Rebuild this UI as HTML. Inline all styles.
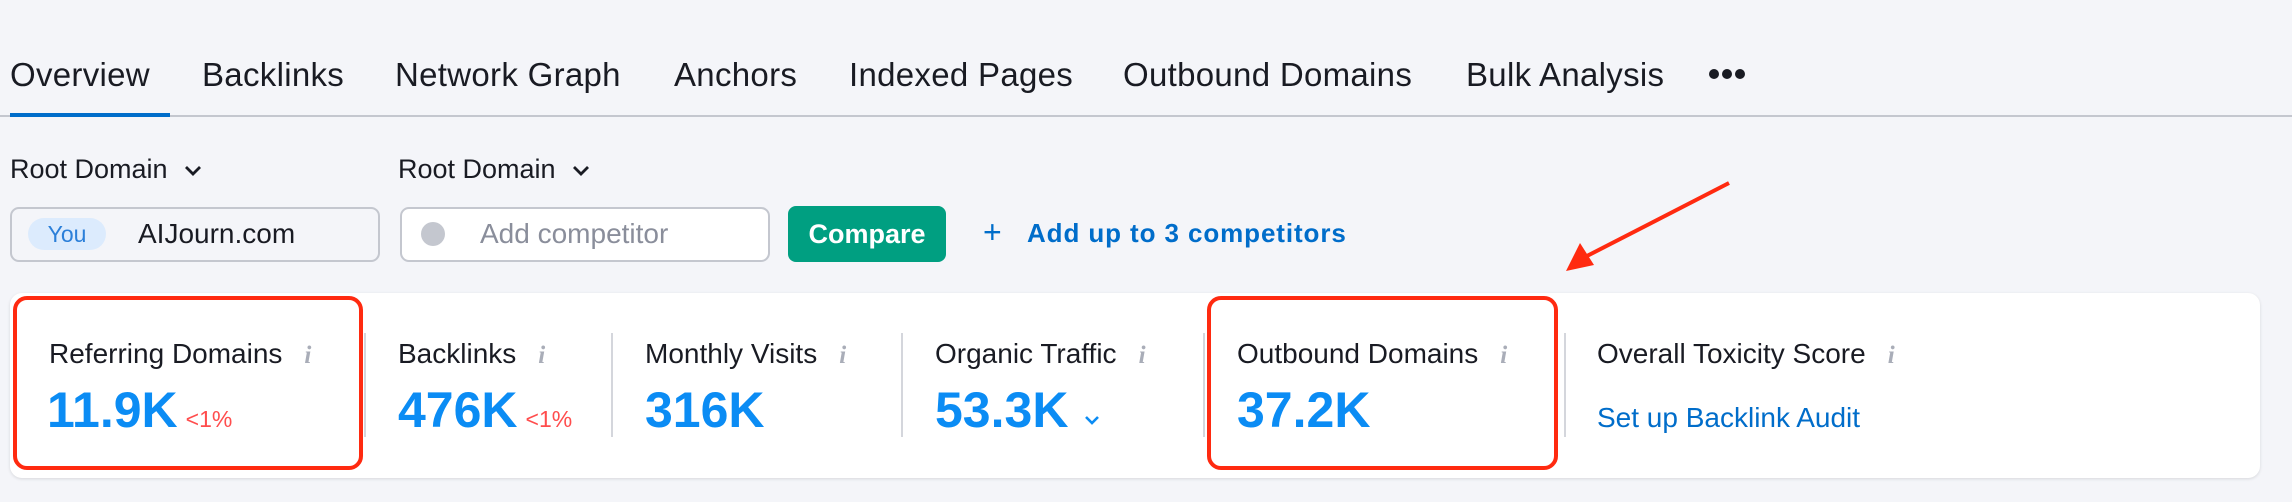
<!DOCTYPE html>
<html><head><meta charset="utf-8"><style>
*{margin:0;padding:0;box-sizing:border-box}
body{width:2292px;height:502px;background:#f4f5f9;font-family:"Liberation Sans",Arial,sans-serif;position:relative;overflow:hidden;color:#191b23}
.a{position:absolute;white-space:nowrap}
.tab{position:absolute;top:56px;font-size:33px;letter-spacing:0.3px;color:#191b23}
.lbl{font-size:28px;color:#191b23;top:338px}
.val{font-size:50px;font-weight:bold;color:#0b8cf4;top:381px}
.pct{font-size:23px;color:#ff4d4d;font-weight:normal;margin-left:8px}
.info{display:inline-block;color:#a9adb8;font-size:25px;font-weight:bold;font-style:italic;margin-left:22px;font-family:"Liberation Serif",serif}
.sep{position:absolute;top:333px;width:2px;height:104px;background:#d4d6dc}
.red{position:absolute;top:296px;height:174px;border:4px solid #ff2a10;border-radius:14px}
</style></head><body>
<div class="tab" style="left:10px">Overview</div>
<div class="tab" style="left:202px">Backlinks</div>
<div class="tab" style="left:395px">Network Graph</div>
<div class="tab" style="left:674px">Anchors</div>
<div class="tab" style="left:849px">Indexed Pages</div>
<div class="tab" style="left:1123px">Outbound Domains</div>
<div class="tab" style="left:1466px">Bulk Analysis</div>
<svg class="a" style="left:1708px;top:66px" width="38" height="16"><circle cx="6" cy="8" r="5" fill="#191b23"/><circle cx="19" cy="8" r="5" fill="#191b23"/><circle cx="32" cy="8" r="5" fill="#191b23"/></svg>
<div class="a" style="left:0;top:115px;width:2292px;height:2px;background:#c4c7cf"></div>
<div class="a" style="left:10px;top:113px;width:160px;height:4px;background:#006dca"></div>

<div class="a" style="left:10px;top:154px;font-size:27px">Root Domain <svg width="20" height="14" viewBox="0 0 20 14" style="margin-left:8px"><path d="M3 3l7 7 7-7" fill="none" stroke="#191b23" stroke-width="2.8"/></svg></div>
<div class="a" style="left:398px;top:154px;font-size:27px">Root Domain <svg width="20" height="14" viewBox="0 0 20 14" style="margin-left:8px"><path d="M3 3l7 7 7-7" fill="none" stroke="#191b23" stroke-width="2.8"/></svg></div>

<div class="a" style="left:10px;top:207px;width:370px;height:55px;border:2px solid #c4c7cf;border-radius:9px;background:#f4f5f9"></div>
<div class="a" style="left:28px;top:218px;width:78px;height:32px;background:#dcebfd;border-radius:16px;color:#2b7fd9;font-size:23px;text-align:center;line-height:32px">You</div>
<div class="a" style="left:138px;top:217px;font-size:28px;line-height:34px">AIJourn.com</div>

<div class="a" style="left:400px;top:207px;width:370px;height:55px;border:2px solid #c4c7cf;border-radius:9px;background:#fff"></div>
<div class="a" style="left:421px;top:222px;width:24px;height:24px;border-radius:50%;background:#c4c7cf"></div>
<div class="a" style="left:480px;top:217px;font-size:28px;line-height:34px;color:#8a8e9b">Add competitor</div>

<div class="a" style="left:788px;top:206px;width:158px;height:56px;background:#009f81;border-radius:8px;color:#fff;font-size:27px;font-weight:bold;text-align:center;line-height:56px">Compare</div>
<div class="a" style="left:983px;top:215px;font-size:32px;color:#006dca;line-height:34px">+</div>
<div class="a" style="left:1027px;top:217px;font-size:26px;color:#006dca;font-weight:bold;letter-spacing:0.9px;line-height:32px">Add up to 3 competitors</div>

<svg class="a" style="left:0;top:0" width="2292" height="502"><line x1="1729" y1="183" x2="1585" y2="257" stroke="#ff2a10" stroke-width="4"/><polygon points="1566,271 1580,243 1594,265" fill="#ff2a10"/></svg>

<div class="a" style="left:10px;top:293px;width:2250px;height:185px;background:#fff;border-radius:12px;box-shadow:0 1px 3px rgba(0,0,0,0.12)"></div>
<div class="sep" style="left:364px"></div>
<div class="sep" style="left:611px"></div>
<div class="sep" style="left:901px"></div>
<div class="sep" style="left:1203px"></div>
<div class="sep" style="left:1564px"></div>

<div class="a lbl" style="left:49px">Referring Domains<span class="info">i</span></div>
<div class="a lbl" style="left:398px">Backlinks<span class="info">i</span></div>
<div class="a lbl" style="left:645px">Monthly Visits<span class="info">i</span></div>
<div class="a lbl" style="left:935px">Organic Traffic<span class="info">i</span></div>
<div class="a lbl" style="left:1237px">Outbound Domains<span class="info">i</span></div>
<div class="a lbl" style="left:1597px">Overall Toxicity Score<span class="info">i</span></div>

<div class="a val" style="left:47px">11.9K<span class="pct">&lt;1%</span></div>
<div class="a val" style="left:398px">476K<span class="pct">&lt;1%</span></div>
<div class="a val" style="left:645px">316K</div>
<div class="a val" style="left:935px">53.3K <svg width="20" height="14" viewBox="0 0 20 14"><path d="M4 4l6 6 6-6" fill="none" stroke="#0b8cf4" stroke-width="2.6"/></svg></div>
<div class="a val" style="left:1237px">37.2K</div>
<div class="a" style="left:1597px;top:402px;font-size:28px;color:#006dca">Set up Backlink Audit</div>

<div class="red" style="left:13px;width:350px"></div>
<div class="red" style="left:1207px;width:351px"></div>
</body></html>
